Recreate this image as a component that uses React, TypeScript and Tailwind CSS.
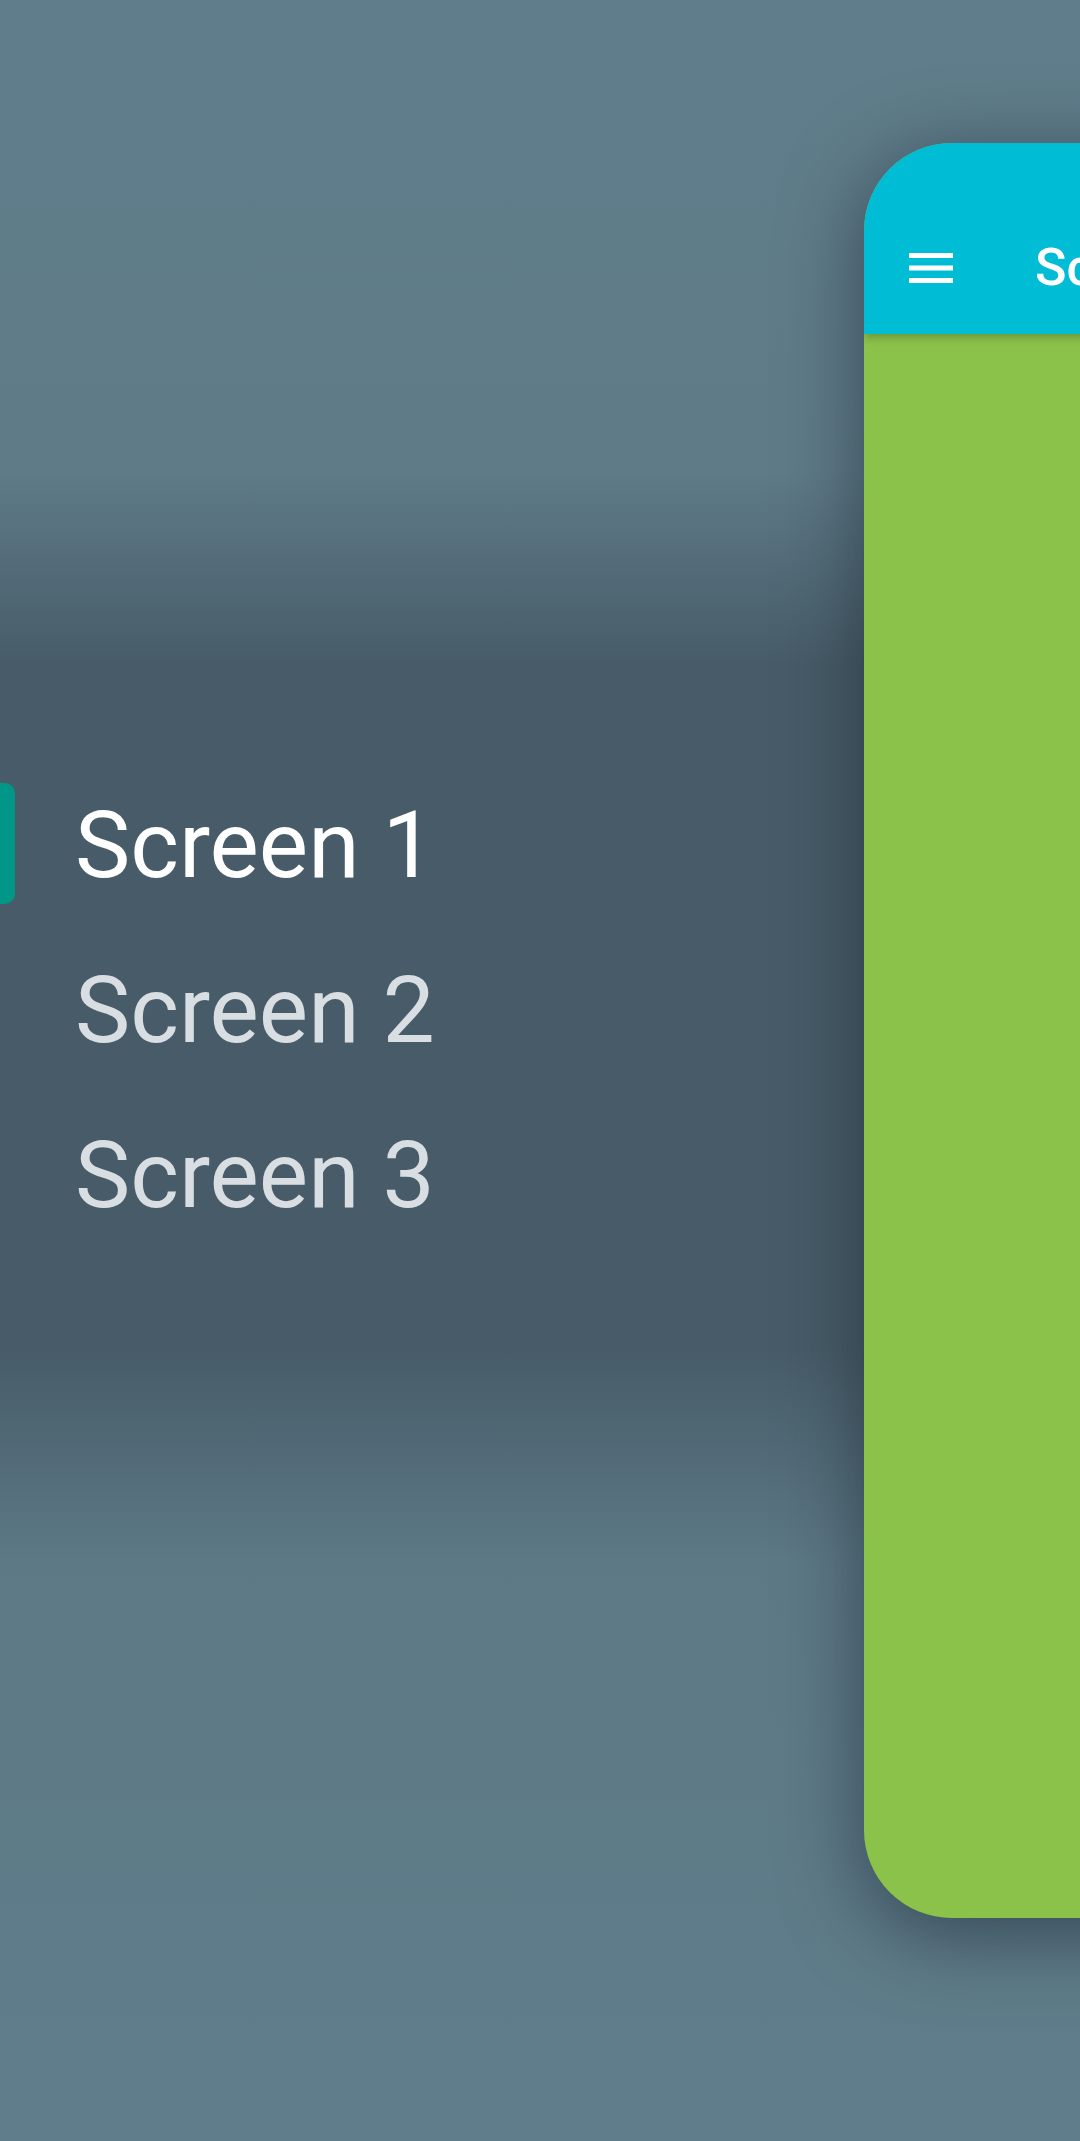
import React from "react";

const items = ["Screen 1", "Screen 2", "Screen 3"];

const MenuIcon = () => (
  <svg width="44" height="30" viewBox="0 0 44 30" className="block">
    <rect x="0" y="0" width="44" height="5" fill="white" />
    <rect x="0" y="12.5" width="44" height="5" fill="white" />
    <rect x="0" y="25" width="44" height="5" fill="white" />
  </svg>
);

export default function App() {
  const active = 0;
  return (
    <div
      className="relative w-[1080px] h-[2141px] overflow-hidden bg-[linear-gradient(to_bottom,#607d8b_0%,#5f7b88_22%,#475c68_31%,#475c68_63%,#5d7986_73%,#607d8b_100%)]"
      style={{ fontFamily: "Roboto, 'Noto Sans', sans-serif" }}
    >
      {/* drawer menu */}
      <nav className="flex flex-col pt-[763px]">
        {items.map((label, i) => (
          <div key={label} className="relative flex items-center h-[165px] pl-[75px]">
            {i === active && (
              <span className="absolute left-[-12px] top-[20px] w-[27px] h-[121px] rounded-[10px] bg-[#009688]" />
            )}
            <span
              className={`text-[93px] leading-[165px] ${
                i === active ? "text-white" : "text-[#d9dee2]"
              }`}
            >
              {label}
            </span>
          </div>
        ))}
      </nav>

      {/* shifted screen */}
      <div className="absolute left-[864px] top-[143px] w-[1080px] h-[1775px] rounded-[88px] overflow-hidden bg-[#8bc34a] shadow-[0_16px_80px_rgba(20,30,40,0.55)] flex flex-col">
        <header className="relative z-10 bg-[#00bcd4] pt-[59px] shadow-[0_4px_8px_rgba(0,0,0,0.22)]">
          <div className="flex items-center h-[132px] pl-[45px]">
            <MenuIcon />
            <span className="ml-[82px] text-[52px] font-medium text-white leading-none whitespace-nowrap">
              Screen 1
            </span>
          </div>
        </header>
        <main className="flex-1" />
      </div>
    </div>
  );
}
